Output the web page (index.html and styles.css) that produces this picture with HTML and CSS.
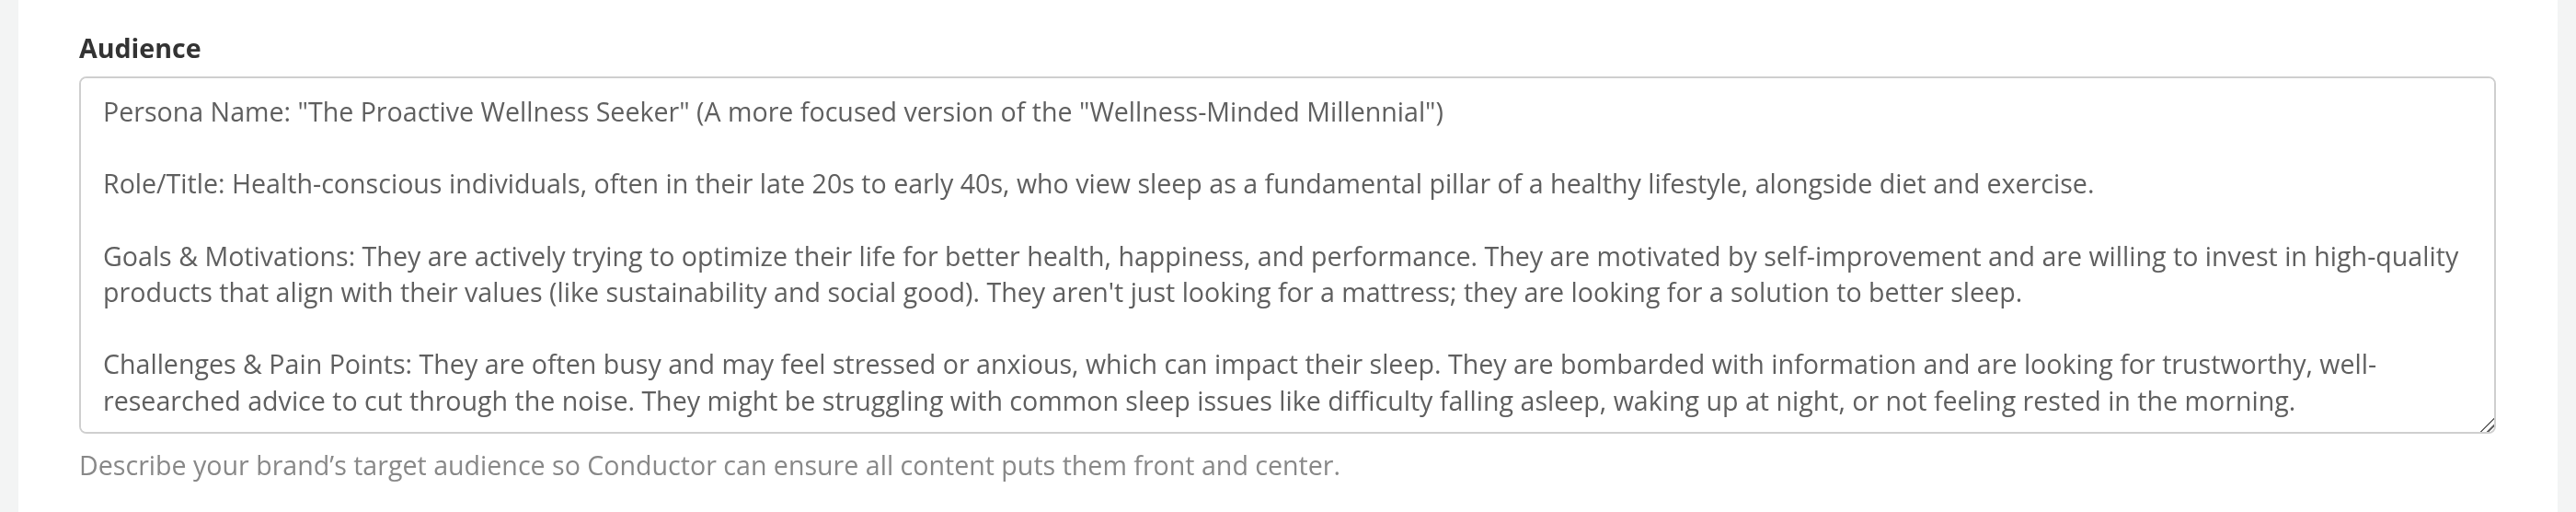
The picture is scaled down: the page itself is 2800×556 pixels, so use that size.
FILE: index.html
```html
<!DOCTYPE html>
<html lang="en">
<head>
    <meta charset="UTF-8">
    <meta name="viewport" content="width=device-width, initial-scale=1.0">
    <title>Brand Settings</title>
    <link rel="stylesheet" href="styles.css">
</head>
<body>
    <div class="panel">
        <div class="field">
            <label for="audience" class="field-label">Audience</label>
            <textarea id="audience" class="field-input">Persona Name: "The Proactive Wellness Seeker" (A more focused version of the "Wellness-Minded Millennial")

Role/Title: Health-conscious individuals, often in their late 20s to early 40s, who view sleep as a fundamental pillar of a healthy lifestyle, alongside diet and exercise.

Goals &amp; Motivations: They are actively trying to optimize their life for better health, happiness, and performance. They are motivated by self-improvement and are willing to invest in high-quality products that align with their values (like sustainability and social good). They aren't just looking for a mattress; they are looking for a solution to better sleep.

Challenges &amp; Pain Points: They are often busy and may feel stressed or anxious, which can impact their sleep. They are bombarded with information and are looking for trustworthy, well-researched advice to cut through the noise. They might be struggling with common sleep issues like difficulty falling asleep, waking up at night, or not feeling rested in the morning.</textarea>
            <p class="field-hint">Describe your brand’s target audience so Conductor can ensure all content puts them front and center.</p>
        </div>
    </div>
</body>
</html>
```

FILE: styles.css
```css
body {
    font-family: "Open Sans", "Noto Sans", sans-serif;
    background-color: #f3f4f4;
    margin: 0;
    height: 100vh;
}
.panel {
    background-color: white;
    margin: 0 20px;
    padding: 32px 67px 0 66px;
    height: 100%;
    box-sizing: border-box;
}
.field-label {
    display: block;
    font-size: 28.6px;
    font-weight: 700;
    line-height: 39px;
    color: #333;
    margin-bottom: 12px;
}
.field-input {
    display: block;
    width: 100%;
    height: 388px;
    box-sizing: border-box;
    padding: 16px 24px;
    font-family: inherit;
    font-size: 28.6px;
    line-height: 39.2px;
    color: #5f5f5f;
    border: 2px solid #cfcfcf;
    border-radius: 8px;
    resize: vertical;
    outline: none;
}
.field-input::-webkit-scrollbar {
    width: 18px;
    height: 18px;
}
.field-input::-webkit-resizer {
    background: linear-gradient(135deg,
        transparent 48%, #666 48%, #666 56%,
        transparent 56%, transparent 72%, #666 72%, #666 80%,
        transparent 80%);
}
.field-hint {
    margin: 14px 0 0;
    font-size: 28.6px;
    line-height: 39px;
    color: #888;
}
```
